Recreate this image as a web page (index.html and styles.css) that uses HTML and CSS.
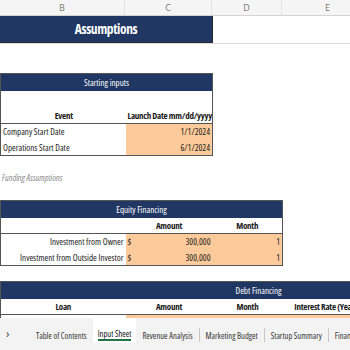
FILE: index.html
```html
<!DOCTYPE html>
<html lang="en">
<head>
    <meta charset="UTF-8">
    <title>Input Sheet</title>
    <link rel="stylesheet" href="styles.css">
</head>
<body>
    <div class="app">
        <div class="col-heads">
            <div class="col-head b">B</div>
            <div class="col-head c">C</div>
            <div class="col-head d">D</div>
            <div class="col-head e">E</div>
        </div>

        <div class="sheet">
            <div class="title-row">
                <div class="title">Assumptions</div>
            </div>

            <table class="grid start">
                <colgroup><col class="w-b"><col class="w-c"></colgroup>
                <tr class="bar"><td colspan="2">Starting inputs</td></tr>
                <tr class="head tall"><th>Event</th><th class="right">Launch Date mm/dd/yyyy</th></tr>
                <tr><td class="left">Company Start Date</td><td class="input right">1/1/2024</td></tr>
                <tr><td class="left">Operations Start Date</td><td class="input right">6/1/2024</td></tr>
            </table>

            <div class="note">Funding Assumptions</div>

            <table class="grid equity">
                <colgroup><col class="w-b"><col class="w-c"><col class="w-d"></colgroup>
                <tr class="bar"><td colspan="3">Equity Financing</td></tr>
                <tr class="head"><th></th><th>Amount</th><th>Month</th></tr>
                <tr>
                    <td class="right">Investment from Owner</td>
                    <td class="input"><div class="money"><span>$</span><span>300,000</span></div></td>
                    <td class="input right">1</td>
                </tr>
                <tr>
                    <td class="right">Investment from Outside Investor</td>
                    <td class="input"><div class="money"><span>$</span><span>300,000</span></div></td>
                    <td class="input right">1</td>
                </tr>
            </table>

            <table class="grid debt">
                <colgroup><col class="w-b"><col class="w-c"><col class="w-d"><col class="w-e"><col class="w-f"></colgroup>
                <tr class="bar"><td colspan="5">Debt Financing</td></tr>
                <tr class="head"><th>Loan</th><th>Amount</th><th>Month</th><th>Interest Rate (Yearly)</th><th>Term</th></tr>
                <tr>
                    <td class="right">Loan</td>
                    <td class="input"><div class="money"><span>$</span><span>100,000</span></div></td>
                    <td class="input right">1</td>
                    <td class="input right">6%</td>
                    <td class="input right">5</td>
                </tr>
            </table>
        </div>

        <nav class="tabs">
            <span class="arrow">&#x203A;</span>
            <span class="tab">Table of Contents</span>
            <span class="tab active"><span class="tab-label">Input Sheet</span></span>
            <span class="tab">Revenue Analysis</span>
            <span class="tab">Marketing Budget</span>
            <span class="tab">Startup Summary</span>
            <span class="tab">Financials</span>
        </nav>
    </div>
</body>
</html>
```

FILE: styles.css
```css
* {
    margin: 0;
    padding: 0;
    box-sizing: border-box;
}

body {
    font-family: 'Open Sans', 'Roboto', sans-serif;
    font-stretch: 75%;
    font-size: 9px;
    color: #1a1a1a;
    background: #ffffff;
}

.app {
    width: 350px;
    height: 350px;
    display: flex;
    flex-direction: column;
    overflow: hidden;
}

/* column letters */
.col-heads {
    display: flex;
    height: 16px;
    flex-shrink: 0;
    background: #f5f5f5;
    border-bottom: 1px solid #d4d4d4;
    color: #777777;
    font-size: 9px;
    font-stretch: 100%;
}

.col-head {
    display: flex;
    align-items: center;
    justify-content: center;
    border-right: 1px solid #e4e4e4;
    flex-shrink: 0;
}

.col-head.b { width: 125px; }
.col-head.c { width: 87px; }
.col-head.d { width: 70px; }
.col-head.e { width: 92px; }

.sheet {
    flex: 1;
    overflow: hidden;
    min-height: 0;
}

.title-row {
    border-bottom: 1px solid #d9d9d9;
}

.title {
    width: 213px;
    height: 27px;
    background: #203764;
    color: #ffffff;
    font-weight: bold;
    font-size: 13.5px;
    letter-spacing: -0.4px;
    display: flex;
    align-items: center;
    justify-content: center;
    border-bottom: 1px solid #2b2b2b;
    border-right: 1px solid #2b2b2b;
}

.grid {
    border-collapse: collapse;
    table-layout: fixed;
    border: 1px solid #555555;
}

.w-b { width: 125px; }
.w-c { width: 87px; }
.w-d { width: 70px; }
.w-e { width: 92px; }
.w-f { width: 142px; }

.grid td,
.grid th {
    height: 16px;
    padding: 0 2px;
    white-space: nowrap;
    overflow: hidden;
    font-weight: normal;
}

.grid th {
    font-weight: bold;
    text-align: center;
    vertical-align: middle;
    letter-spacing: -0.25px;
}

.grid .bar td {
    background: #203764;
    color: #ffffff;
    text-align: center;
    height: 17px;
}

.grid .head {
    border-bottom: 1px solid #555555;
}

.grid .head.tall th {
    height: 33px;
    vertical-align: bottom;
    padding-bottom: 1px;
    padding-right: 1px;
}

.left { text-align: left; }
.right { text-align: right; }

.grid .input {
    background: #fdcb9b;
}

.money {
    display: flex;
    justify-content: space-between;
    align-items: center;
}

.start {
    width: 212px;
    margin-top: 29px;
}

.note {
    height: 16px;
    margin-top: 13px;
    padding-left: 2px;
    font-style: italic;
    color: #8a8a8a;
    display: flex;
    align-items: center;
}

.equity {
    width: 282px;
    margin-top: 15px;
}

.debt {
    width: 516px;
    margin-top: 15px;
}

/* sheet tabs */
.tabs {
    height: 32px;
    flex-shrink: 0;
    background: #f3f3f3;
    display: flex;
    align-items: flex-start;
    color: #333333;
    font-size: 8.5px;
    white-space: nowrap;
    padding-left: 4px;
}

.arrow {
    flex-shrink: 0;
    width: 26px;
    height: 30px;
    display: flex;
    align-items: center;
    font-size: 13px;
    color: #555555;
    padding-left: 2px;
}

.tab {
    flex-shrink: 0;
    padding: 0 6px;
    height: 14px;
    margin-top: 10px;
    display: flex;
    align-items: center;
    border-right: 1px solid #c8c8c8;
}

.tab.active {
    background: #ffffff;
    height: 25px;
    margin-top: 0;
    padding: 0 5px;
    margin-left: -1px;
    border-right: none;
    color: #111111;
    align-items: flex-start;
}

.tab-label {
    border-bottom: 2px solid #217346;
    margin-top: 10px;
}
```
